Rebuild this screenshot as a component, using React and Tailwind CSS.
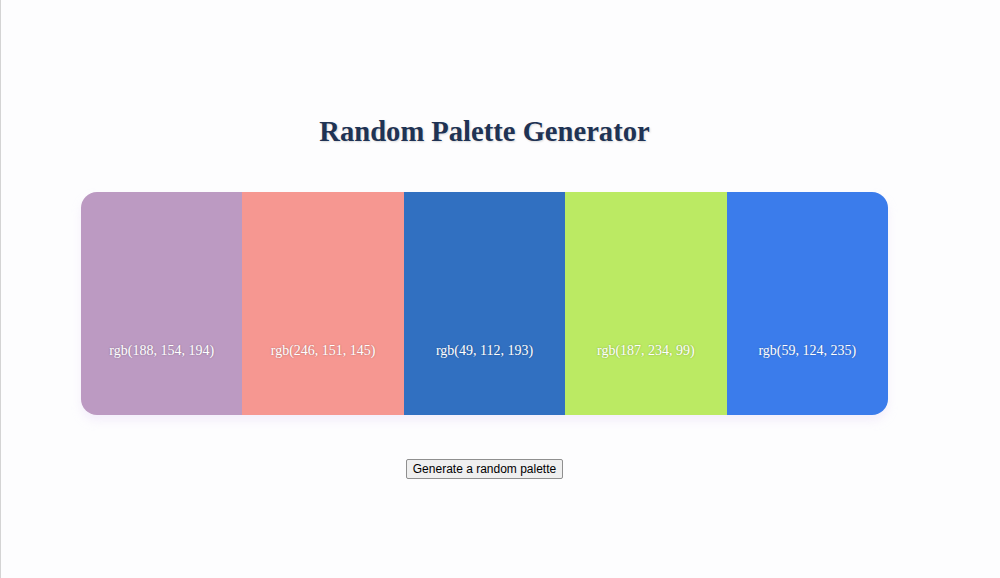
import React, { useState } from 'react';

const initial = [
  [188, 154, 194],
  [246, 151, 145],
  [49, 112, 193],
  [187, 234, 99],
  [59, 124, 235],
];

function randomPalette() {
  return Array.from({ length: 5 }, () => [0, 0, 0].map(() => Math.floor(Math.random() * 256)));
}

export default function App() {
  const [colors, setColors] = useState(initial);

  return (
    <div className="min-h-[578px] w-[1000px] bg-[#fdfdfe] border-l border-[#d4d4d4] flex">
      <div className="w-[967px] flex flex-col items-center pt-[112px]">
        {/* Title */}
        <h1 className="font-['Liberation_Serif','Times_New_Roman',serif] text-[28.6px] leading-[40px] font-bold text-[#1f3354] [text-shadow:1px_1px_2px_rgba(0,0,0,0.15)]">
          Random Palette Generator
        </h1>

        {/* Palette */}
        <div className="mt-[40px] flex w-[807px] h-[223px] rounded-[16px] overflow-hidden shadow-[0_6px_10px_rgba(230,215,245,0.35)]">
          {colors.map((c, i) => {
            const rgb = `rgb(${c[0]}, ${c[1]}, ${c[2]})`;
            return (
              <div
                key={i}
                className="flex-1 flex items-end justify-center pb-[56px]"
                style={{ backgroundColor: rgb }}
              >
                <span className="font-['Liberation_Serif','Times_New_Roman',serif] text-white text-[14px] leading-[16px] [text-shadow:0_0_2px_rgba(0,0,0,0.3)]">
                  {rgb}
                </span>
              </div>
            );
          })}
        </div>

        {/* Button */}
        <button
          onClick={() => setColors(randomPalette())}
          className="mt-[44px] px-[6px] h-[20px] font-['Liberation_Sans',Arial,sans-serif] text-[12px] leading-[14px] text-black bg-[#efefef] border border-[#8f8f8f] rounded-[2px]"
        >
          Generate a random palette
        </button>
      </div>
    </div>
  );
}
